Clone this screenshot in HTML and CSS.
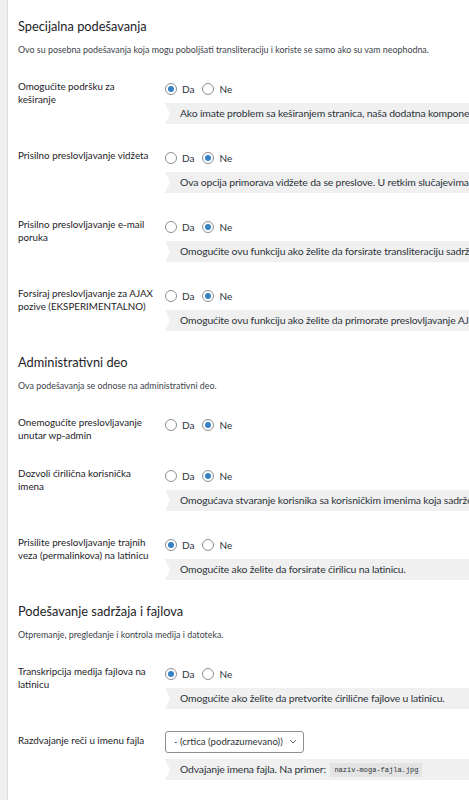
FILE: index.html
```html
<!DOCTYPE html>
<html lang="sr">
<head>
    <meta charset="UTF-8">
    <meta name="viewport" content="width=device-width, initial-scale=1.0">
    <title>Podešavanja</title>
    <link rel="stylesheet" href="styles.css">
</head>
<body>
    <div class="admin-panel">

        <section class="settings-section first">
            <h2>Specijalna podešavanja</h2>
            <p class="section-desc">Ovo su posebna podešavanja koja mogu poboljšati transliteraciju i koriste se samo ako su vam neophodna.</p>

            <div class="setting-row">
                <div class="setting-label">Omogućite podršku za keširanje</div>
                <div class="setting-field">
                    <div class="radio-line">
                        <label class="radio"><input type="radio" name="cache" checked> Da</label>
                        <label class="radio"><input type="radio" name="cache"> Ne</label>
                    </div>
                    <div class="note">Ako imate problem sa keširanjem stranica, naša dodatna komponenta će pokušati da reši problem.</div>
                </div>
            </div>

            <div class="setting-row">
                <div class="setting-label">Prisilno preslovljavanje vidžeta</div>
                <div class="setting-field">
                    <div class="radio-line">
                        <label class="radio"><input type="radio" name="widgets"> Da</label>
                        <label class="radio"><input type="radio" name="widgets" checked> Ne</label>
                    </div>
                    <div class="note">Ova opcija primorava vidžete da se preslove. U retkim slučajevima može doći do problema.</div>
                </div>
            </div>

            <div class="setting-row">
                <div class="setting-label">Prisilno preslovljavanje e-mail poruka</div>
                <div class="setting-field">
                    <div class="radio-line">
                        <label class="radio"><input type="radio" name="email"> Da</label>
                        <label class="radio"><input type="radio" name="email" checked> Ne</label>
                    </div>
                    <div class="note">Omogućite ovu funkciju ako želite da forsirate transliteraciju sadržaja e-mail poruka.</div>
                </div>
            </div>

            <div class="setting-row">
                <div class="setting-label">Forsiraj preslovljavanje za AJAX pozive (EKSPERIMENTALNO)</div>
                <div class="setting-field">
                    <div class="radio-line">
                        <label class="radio"><input type="radio" name="ajax"> Da</label>
                        <label class="radio"><input type="radio" name="ajax" checked> Ne</label>
                    </div>
                    <div class="note">Omogućite ovu funkciju ako želite da primorate preslovljavanje AJAX poziva.</div>
                </div>
            </div>
        </section>

        <section class="settings-section">
            <h2>Administrativni deo</h2>
            <p class="section-desc">Ova podešavanja se odnose na administrativni deo.</p>

            <div class="setting-row">
                <div class="setting-label">Onemogućite preslovljavanje unutar wp-admin</div>
                <div class="setting-field">
                    <div class="radio-line">
                        <label class="radio"><input type="radio" name="wpadmin"> Da</label>
                        <label class="radio"><input type="radio" name="wpadmin" checked> Ne</label>
                    </div>
                </div>
            </div>

            <div class="setting-row">
                <div class="setting-label">Dozvoli ćirilična korisnička imena</div>
                <div class="setting-field">
                    <div class="radio-line">
                        <label class="radio"><input type="radio" name="usernames"> Da</label>
                        <label class="radio"><input type="radio" name="usernames" checked> Ne</label>
                    </div>
                    <div class="note">Omogućava stvaranje korisnika sa korisničkim imenima koja sadrže ćirilična slova.</div>
                </div>
            </div>

            <div class="setting-row">
                <div class="setting-label">Prisilite preslovljavanje trajnih veza (permalinkova) na latinicu</div>
                <div class="setting-field">
                    <div class="radio-line">
                        <label class="radio"><input type="radio" name="permalinks" checked> Da</label>
                        <label class="radio"><input type="radio" name="permalinks"> Ne</label>
                    </div>
                    <div class="note">Omogućite ako želite da forsirate ćirilicu na latinicu.</div>
                </div>
            </div>
        </section>

        <section class="settings-section">
            <h2>Podešavanje sadržaja i fajlova</h2>
            <p class="section-desc">Otpremanje, pregledanje i kontrola medija i datoteka.</p>

            <div class="setting-row">
                <div class="setting-label">Transkripcija medija fajlova na latinicu</div>
                <div class="setting-field">
                    <div class="radio-line">
                        <label class="radio"><input type="radio" name="media" checked> Da</label>
                        <label class="radio"><input type="radio" name="media"> Ne</label>
                    </div>
                    <div class="note">Omogućite ako želite da pretvorite ćirilične fajlove u latinicu.</div>
                </div>
            </div>

            <div class="setting-row">
                <div class="setting-label">Razdvajanje reči u imenu fajla</div>
                <div class="setting-field">
                    <div class="radio-line">
                        <select class="select-field">
                            <option>- (crtica (podrazumevano))</option>
                            <option>_ (donja crta)</option>
                        </select>
                    </div>
                    <div class="note note-select">Odvajanje imena fajla. Na primer: <code>naziv-moga-fajla.jpg</code></div>
                </div>
            </div>
        </section>

    </div>
</body>
</html>
```

FILE: styles.css
```css
html, body {
    margin: 0;
    padding: 0;
}

body {
    background-color: #f0f0f1;
    color: #1d2327;
    font-family: 'Lato', 'Open Sans', sans-serif;
    overflow: hidden;
    height: 800px;
}

.admin-panel {
    margin-left: 7px;
    padding-left: 10px;
    background-color: #fff;
    border-left: 1px solid #dcdcde;
    height: 100%;
    overflow: hidden;
}

.settings-section.first {
    padding-top: 7px;
}

h2 {
    margin: 10px 0 0;
    font-size: 12.8px;
    line-height: 18px;
    font-weight: 400;
    color: #1d2327;
}

.section-desc {
    margin: 9px 0 11px;
    font-size: 8.9px;
    line-height: 12px;
    color: #3c434a;
}

/* one option: label on the left, controls on the right */
.setting-row {
    display: grid;
    grid-template-columns: 147px 600px;
    align-items: start;
}

.setting-label {
    padding: 12.5px 11px 12.5px 0;
    font-size: 9.8px;
    line-height: 13px;
    color: #1d2327;
}

.setting-field {
    padding: 12px 0;
}

.radio-line {
    display: flex;
    align-items: center;
    height: 20px;
    font-size: 10px;
}

.radio {
    display: flex;
    align-items: center;
    margin-right: 8px;
    color: #2c3338;
}

.radio input {
    appearance: none;
    -webkit-appearance: none;
    width: 12px;
    height: 12px;
    margin: 0 5px 0 0;
    border: 1px solid #8c8f94;
    border-radius: 50%;
    background: #fff;
    display: flex;
    align-items: center;
    justify-content: center;
    box-sizing: border-box;
}

.radio input:checked::before {
    content: '';
    width: 6px;
    height: 6px;
    border-radius: 50%;
    background-color: #3582c4;
}

/* grey hint strip with the notched left edge */
.note {
    margin-top: 4px;
    height: 21px;
    line-height: 21px;
    padding-left: 15px;
    font-size: 10.4px;
    letter-spacing: -0.15px;
    color: #2c3338;
    background-color: #f0f0f1;
    white-space: nowrap;
    clip-path: polygon(0 0, 100% 0, 100% 100%, 0 100%, 5px 50%);
}

.note-select {
    margin-top: 6px;
}

.note code {
    display: inline-block;
    margin-left: 2px;
    padding: 0 4px;
    height: 14px;
    line-height: 14px;
    font-family: 'Liberation Mono', 'DejaVu Sans Mono', monospace;
    font-size: 7px;
    letter-spacing: 0;
    background-color: #e3e3e4;
    vertical-align: middle;
}

.select-field {
    appearance: none;
    -webkit-appearance: none;
    width: 139px;
    height: 22px;
    margin-top: -3px;
    padding: 0 14px 0 8px;
    border: 1px solid #8c8f94;
    border-radius: 3px;
    font-family: 'Lato', 'Open Sans', sans-serif;
    font-size: 9.6px;
    color: #2c3338;
    background-color: #fff;
    background-image: url("data:image/svg+xml,%3Csvg xmlns='http://www.w3.org/2000/svg' width='8' height='5' viewBox='0 0 8 5'%3E%3Cpath d='M1 1l3 3 3-3' fill='none' stroke='%23555d66' stroke-width='1'/%3E%3C/svg%3E");
    background-repeat: no-repeat;
    background-position: right 6px center;
}
```
